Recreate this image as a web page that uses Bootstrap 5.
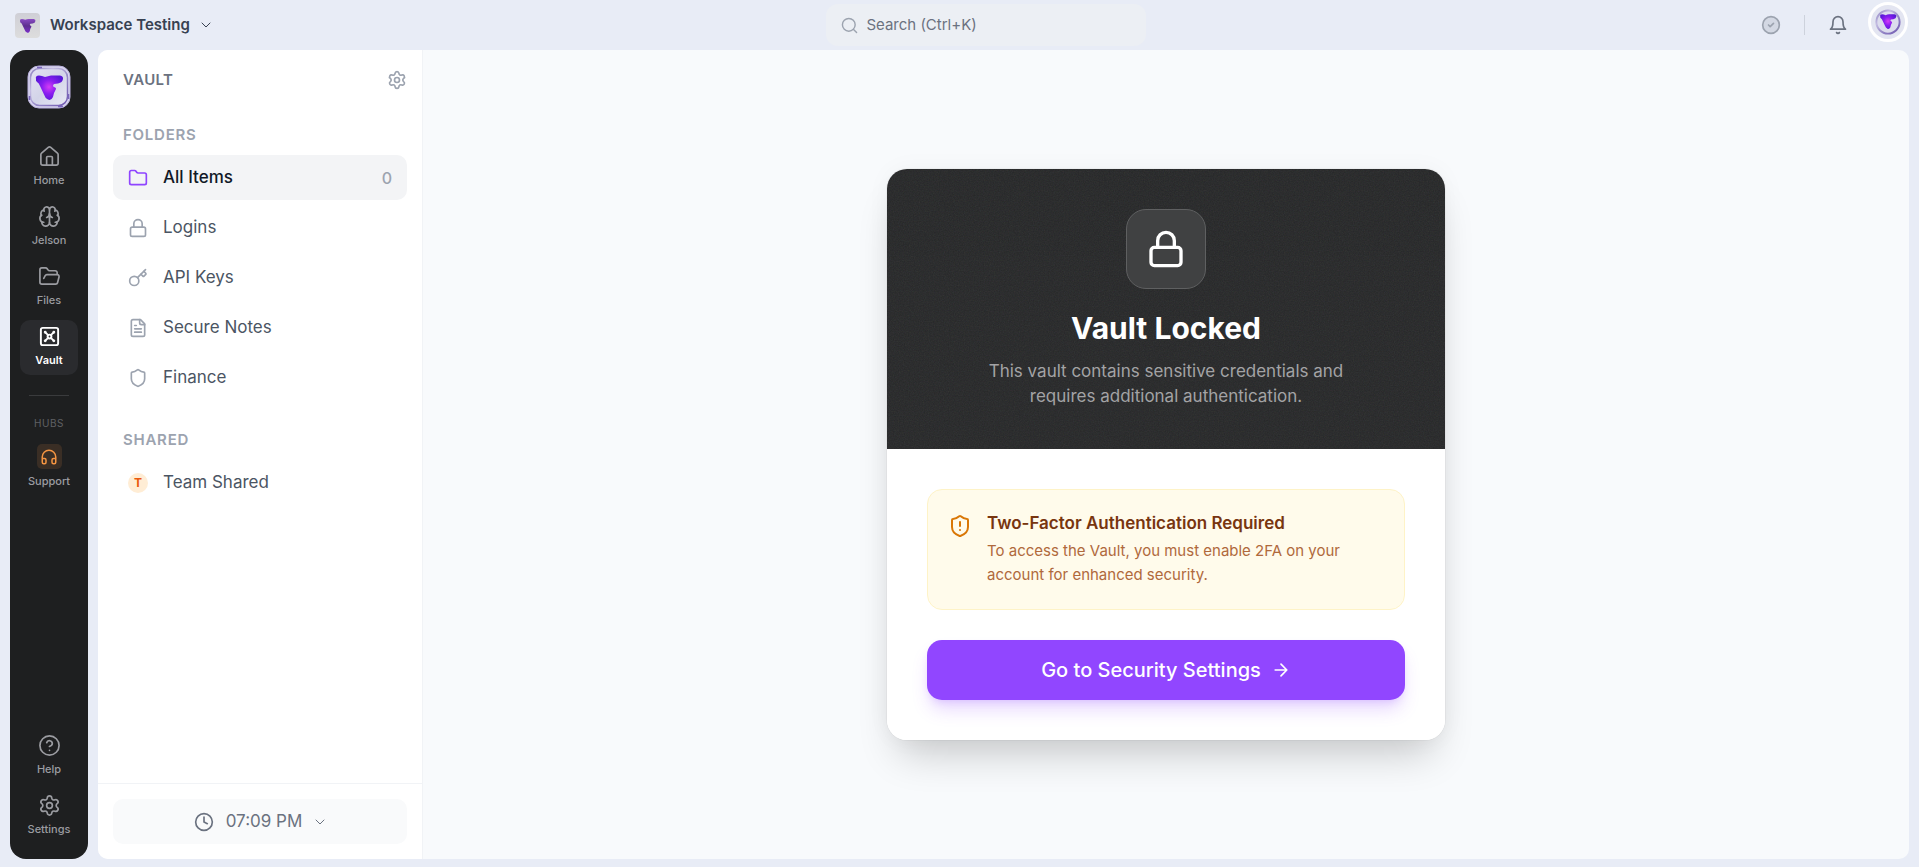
<!DOCTYPE html>
<html lang="en">
<head>
<meta charset="utf-8">
<meta name="viewport" content="width=device-width, initial-scale=1">
<title>Vault</title>
<link href="https://cdn.jsdelivr.net/npm/bootstrap@5.3.0/dist/css/bootstrap.min.css" rel="stylesheet">
<style>
  body { font-family: Inter, "Liberation Sans", sans-serif; background: #e8ecf6; color: #4b5563; }
  a { text-decoration: none; color: inherit; }
  svg.ico { fill: none; stroke: currentColor; stroke-width: 2; stroke-linecap: round; stroke-linejoin: round; flex: none; width: 20px; height: 20px; }
  svg.ico-sm { width: 12px; height: 12px; }
  svg.ico-md { width: 24px; height: 24px; }
  svg.thin { stroke-width: 1.75; }

  /* Top bar */
  .topbar { height: 50px; padding: 0 11px 0 15px; }
  .workspace { font-size: 15px; font-weight: 600; color: #374151; gap: 10px; }
  .search-box { flex: 0 1 320px; height: 42px; border-radius: 12px; background: #eceff4; padding: 0 15px; color: #9ca3af; }
  .search-box input { font-size: 15px; color: #6b7280; outline: 0; }
  .search-box input::placeholder { color: #6b7280; opacity: 1; }
  .search-box svg.ico { width: 17px; height: 17px; }
  .top-rule { width: 1px; height: 20px; background: #cdd2dc; margin: 0 23px; }
  .avatar { width: 40px; height: 40px; border: 3px solid #fff; margin: 0 0 7px 20px; background: #e3e5f1; }

  /* Dark rail */
  .rail { width: 78px; border-radius: 16px; background: #1e1f20; padding: 15px 10px; color: #9b9ca1; }
  .rail-logo { margin-bottom: 31px; }
  .rail a { display: flex; flex-direction: column; align-items: center; gap: 4px; width: 58px; height: 55px; padding-top: 5px; border-radius: 10px; font-size: 11px; line-height: 16px; font-weight: 500; }
  .rail a.active { background: #2a2b2e; color: #fff; font-weight: 600; }
  .rail a svg.ico { width: 23px; height: 23px; }
  .rail-rule { width: 40px; height: 1px; background: #3a3b3d; margin: 20px 0; }
  .rail-title { font-size: 10px; line-height: 14px; letter-spacing: 0.05em; color: #606164; margin-bottom: 9px; }
  .rail a .hub { width: 25px; height: 25px; border-radius: 5px; background: #3a2e25; color: #f59542; }
  .rail a .hub svg.ico { width: 18px; height: 18px; }

  /* Sidebar */
  .shell { border-radius: 10px; background: #f8fafc; }
  .side { width: 325px; background: #fff; border-right: 1px solid #f1f3f6; }
  .side-head { height: 60px; padding: 0 15px 0 25px; }
  .side h1, .side h2 { font-size: 15px; line-height: 20px; font-weight: 600; color: #6b7280; letter-spacing: 0.025em; margin: 0; }
  .side h2 { color: #9ca3af; letter-spacing: 0.05em; padding: 0 10px; margin-bottom: 10px; }
  .side-nav { padding: 15px; }
  .side-list { gap: 5px; margin-bottom: 30px; }
  .side-nav a { display: flex; align-items: center; gap: 15px; height: 45px; padding: 0 15px; border-radius: 10px; font-size: 17px; color: #4b5563; }
  .side-nav a svg { color: #9ca3af; }
  .side-nav a.active { background: #f3f4f6; color: #111827; font-weight: 500; }
  .side-nav a.active svg { color: #8f45ff; }
  .count { font-size: 16px; color: #9ca3af; }
  .dot { width: 20px; height: 20px; background: #ffedd5; color: #ea580c; font-size: 12px; font-weight: 700; }
  .side-foot { padding: 15px; border-top: 1px solid #f1f3f6; }
  .clock { height: 45px; border: 0; border-radius: 10px; background: #f9fafb; color: #6b7280; font-size: 17px; gap: 12px; }

  /* Lock card */
  .lock-card { width: 558px; border: 0; border-radius: 20px; overflow: hidden; box-shadow: 0 25px 40px -12px rgba(0,0,0,.2), 0 0 24px rgba(0,0,0,.04), 0 0 0 1px rgba(0,0,0,.03); }
  .lock-top { background: #262728; padding: 40px; isolation: isolate; }
  .grain { z-index: -1; opacity: .09; }
  .lock-badge { width: 80px; height: 80px; border-radius: 20px; background: #404142; border: 1px solid #5f6061; color: #fff; }
  .lock-badge svg.ico { width: 40px; height: 40px; }
  .lock-top h3 { font-size: 30px; line-height: 38px; font-weight: 700; color: #fff; margin: 20px 0 12px; }
  .lock-top p { font-size: 17px; line-height: 25px; color: #a3a3a5; max-width: 400px; margin: 0 auto; }
  .lock-body { padding: 40px; background: #fff; }
  .notice { border: 1px solid #fef3c7; background: #fffbeb; border-radius: 15px; padding: 20px 20px 22px; gap: 15px; color: #d97706; margin-bottom: 30px; }
  .notice h4 { font-size: 17px; line-height: 26px; font-weight: 600; color: #78350f; margin: 0 0 3px; }
  .notice p { font-size: 15px; line-height: 24px; color: #b0693c; margin: 0; }
  .go { height: 60px; border: 0; border-radius: 15px; background: #9146ff; color: #fff; font-size: 20px; font-weight: 500; gap: 10px; box-shadow: 0 12px 18px -3px rgba(145,70,255,.22), 0 4px 8px -4px rgba(145,70,255,.25); }
  .go:hover { background: #8438f5; color: #fff; }
</style>
</head>
<body>
<svg class="position-absolute" width="0" height="0" aria-hidden="true">
  <defs>
    <radialGradient id="gem" gradientUnits="userSpaceOnUse" cx="22" cy="22" r="14"><stop offset="0" stop-color="#d43df5"/><stop offset=".5" stop-color="#8a1df0"/><stop offset="1" stop-color="#5a18d8"/></radialGradient>
    <linearGradient id="dusk" x1="0" y1="0" x2="0" y2="1"><stop offset="0" stop-color="#8a4cc4"/><stop offset=".5" stop-color="#5d2f8f"/><stop offset="1" stop-color="#7a2fc8"/></linearGradient>
    <linearGradient id="glass" x1="0" y1="0" x2="1" y2="1"><stop offset="0" stop-color="#e4e2f4"/><stop offset=".5" stop-color="#d3d4e8"/><stop offset="1" stop-color="#e8e9f5"/></linearGradient>
    <linearGradient id="rim" x1="0" y1="0" x2="1" y2="1"><stop offset="0" stop-color="#8d80c0"/><stop offset=".3" stop-color="#c4bde2"/><stop offset=".6" stop-color="#9486c6"/><stop offset="1" stop-color="#6f57b0"/></linearGradient>
    <linearGradient id="plate" x1="0" y1="0" x2="0" y2="1"><stop offset="0" stop-color="#cfcfd6"/><stop offset="1" stop-color="#dddddd"/></linearGradient>
  </defs>
  <symbol id="mark-v" viewBox="0 0 44 44"><path d="M9 14Q8 10.500 12 10.500Q15 10.500 18 12Q21 11 24 10.500H33Q36.500 11 36 14Q35.500 17.500 31 18.500L27 19Q25 21 27 22Q30 23 28.500 25Q26.500 28 26 32Q24 36 21 34.500Q18 33 17 29.500L13 21Q12 18 10 17Q8.500 16 9 14Z"/></symbol>
  <symbol id="i-home" viewBox="0 0 24 24"><path d="M15 21v-8a1 1 0 0 0-1-1h-4a1 1 0 0 0-1 1v8"/><path d="M3 10a2 2 0 0 1 .709-1.528l7-5.999a2 2 0 0 1 2.582 0l7 5.999A2 2 0 0 1 21 10v9a2 2 0 0 1-2 2H5a2 2 0 0 1-2-2z"/></symbol>
  <symbol id="i-brain" viewBox="0 0 24 24"><path d="M12 18V5"/><path d="M15 13a4.170 4.170 0 0 1-3-4 4.170 4.170 0 0 1-3 4"/><path d="M17.598 6.500A3 3 0 1 0 12 5a3 3 0 1 0-5.598 1.500"/><path d="M17.997 5.125a4 4 0 0 1 2.526 5.770"/><path d="M18 18a4 4 0 0 0 2-7.464"/><path d="M19.967 17.483A4 4 0 1 1 12 18a4 4 0 1 1-7.967-.517"/><path d="M6 18a4 4 0 0 1-2-7.464"/><path d="M6.003 5.125a4 4 0 0 0-2.526 5.770"/></symbol>
  <symbol id="i-open" viewBox="0 0 24 24"><path d="m6 14 1.500-2.900A2 2 0 0 1 9.240 10H20a2 2 0 0 1 1.940 2.500l-1.540 6a2 2 0 0 1-1.950 1.500H4a2 2 0 0 1-2-2V5a2 2 0 0 1 2-2h3.900a2 2 0 0 1 1.690.9l.810 1.200a2 2 0 0 0 1.670.9H18a2 2 0 0 1 2 2v2"/></symbol>
  <symbol id="i-vault" viewBox="0 0 24 24"><rect width="18" height="18" x="3" y="3" rx="2"/><circle cx="7.500" cy="7.500" r=".5" fill="currentColor"/><path d="m7.900 7.900 2.700 2.700"/><circle cx="16.500" cy="7.500" r=".5" fill="currentColor"/><path d="m13.400 10.600 2.700-2.700"/><circle cx="7.500" cy="16.500" r=".5" fill="currentColor"/><path d="m7.900 16.100 2.700-2.700"/><circle cx="16.500" cy="16.500" r=".5" fill="currentColor"/><path d="m13.400 13.400 2.700 2.700"/><circle cx="12" cy="12" r="2"/></symbol>
  <symbol id="i-phones" viewBox="0 0 24 24"><path d="M3 14h3a2 2 0 0 1 2 2v3a2 2 0 0 1-2 2H5a2 2 0 0 1-2-2v-7a9 9 0 0 1 18 0v7a2 2 0 0 1-2 2h-1a2 2 0 0 1-2-2v-3a2 2 0 0 1 2-2h3"/></symbol>
  <symbol id="i-help" viewBox="0 0 24 24"><circle cx="12" cy="12" r="10"/><path d="M9.090 9a3 3 0 0 1 5.830 1c0 2-3 3-3 3"/><path d="M12 17h.01"/></symbol>
  <symbol id="i-gear" viewBox="0 0 24 24"><path d="M9.671 4.136a2.340 2.340 0 0 1 4.659 0 2.340 2.340 0 0 0 3.319 1.915 2.340 2.340 0 0 1 2.330 4.033 2.340 2.340 0 0 0 0 3.831 2.340 2.340 0 0 1-2.330 4.033 2.340 2.340 0 0 0-3.319 1.915 2.340 2.340 0 0 1-4.659 0 2.340 2.340 0 0 0-3.320-1.915 2.340 2.340 0 0 1-2.330-4.033 2.340 2.340 0 0 0 0-3.831A2.340 2.340 0 0 1 6.350 6.051a2.340 2.340 0 0 0 3.319-1.915"/><circle cx="12" cy="12" r="3"/></symbol>
  <symbol id="i-folder" viewBox="0 0 24 24"><path d="M20 20a2 2 0 0 0 2-2V8a2 2 0 0 0-2-2h-7.900a2 2 0 0 1-1.690-.9L9.600 3.900A2 2 0 0 0 7.930 3H4a2 2 0 0 0-2 2v13a2 2 0 0 0 2 2Z"/></symbol>
  <symbol id="i-lock" viewBox="0 0 24 24"><rect width="18" height="11" x="3" y="11" rx="2"/><path d="M7 11V7a5 5 0 0 1 10 0v4"/></symbol>
  <symbol id="i-key" viewBox="0 0 24 24"><path d="m15.500 7.500 2.300 2.300a1 1 0 0 0 1.400 0l2.100-2.100a1 1 0 0 0 0-1.400L19 4"/><path d="m21 2-9.600 9.600"/><circle cx="7.500" cy="15.500" r="5.500"/></symbol>
  <symbol id="i-file" viewBox="0 0 24 24"><path d="M15 2H6a2 2 0 0 0-2 2v16a2 2 0 0 0 2 2h12a2 2 0 0 0 2-2V7Z"/><path d="M14 2v4a2 2 0 0 0 2 2h4M10 9H8M16 13H8M16 17H8"/></symbol>
  <symbol id="i-shield" viewBox="0 0 24 24"><path d="M20 13c0 5-3.500 7.500-7.660 8.950a1 1 0 0 1-.670-.010C7.500 20.500 4 18 4 13V6a1 1 0 0 1 1-1c2 0 4.500-1.200 6.240-2.720a1.170 1.170 0 0 1 1.520 0C14.510 3.810 17 5 19 5a1 1 0 0 1 1 1z"/></symbol>
  <symbol id="i-clock" viewBox="0 0 24 24"><circle cx="12" cy="12" r="10"/><path d="M12 6v6l4 2"/></symbol>
  <symbol id="i-down" viewBox="0 0 24 24"><path d="m4 8 8 8 8-8"/></symbol>
  <symbol id="i-search" viewBox="0 0 24 24"><circle cx="11" cy="11" r="9"/><path d="m22 22-4.300-4.300"/></symbol>
  <symbol id="i-check" viewBox="0 0 24 24"><circle cx="12" cy="12" r="10" fill="#d3d8e3"/><path d="m9 12 2 2 4-4"/></symbol>
  <symbol id="i-bell" viewBox="0 0 24 24"><path d="M6 8a6 6 0 0 1 12 0c0 7 3 9 3 9H3s3-2 3-9"/><path d="M10.300 21a1.940 1.940 0 0 0 3.400 0"/></symbol>
  <symbol id="i-arrow" viewBox="0 0 24 24"><path d="M5 12h14M12 5l7 7-7 7"/></symbol>
</svg>

<div class="d-flex flex-column vh-100">
  <header class="topbar d-flex align-items-center justify-content-between">
    <button type="button" class="workspace btn p-0 border-0 d-flex align-items-center">
      <svg width="25" height="25" viewBox="0 0 44 44"><rect width="44" height="44" rx="7" fill="url(#plate)"/><use href="#mark-v" fill="url(#dusk)"/></svg>
      <span>Workspace Testing</span>
      <svg class="ico ico-sm"><use href="#i-down"/></svg>
    </button>
    <label class="search-box d-flex align-items-center gap-2">
      <svg class="ico"><use href="#i-search"/></svg>
      <input type="text" class="border-0 bg-transparent p-0 flex-grow-1" placeholder="Search (Ctrl+K)" aria-label="Search">
    </label>
    <div class="d-flex align-items-center">
      <button type="button" class="btn p-0 border-0 d-flex" aria-label="Status"><svg class="ico" style="color:#9ca3af"><use href="#i-check"/></svg></button>
      <span class="top-rule"></span>
      <button type="button" class="btn p-0 border-0 d-flex" aria-label="Notifications" style="color:#6b7280"><svg class="ico"><use href="#i-bell"/></svg></button>
      <a href="#" class="avatar rounded-circle d-block" aria-label="Account">
        <svg width="34" height="34" viewBox="0 0 44 44" class="d-block"><circle cx="22" cy="22" r="15" fill="#dcdced" stroke="url(#rim)" stroke-width="2.500"/><svg x="5" y="4" width="34" height="34"><use href="#mark-v" fill="url(#gem)"/></svg></svg>
      </a>
    </div>
  </header>

  <div class="d-flex flex-grow-1 pb-2" style="min-height:0;padding:0 10px;gap:10px">
    <nav class="rail d-flex flex-column align-items-center flex-shrink-0" aria-label="Main">
      <svg width="44" height="44" viewBox="0 0 44 44" class="rail-logo flex-shrink-0"><rect x="1" y="1" width="42" height="42" rx="11" fill="#d9d6ee" stroke="#b9b0de"/><rect x="3.500" y="3.500" width="37" height="37" rx="9" fill="url(#glass)" stroke="url(#rim)" stroke-width="1.500"/><path d="M10 2.500h5M31 41.500h5M41.500 29v5M2.500 31v4" stroke="#7a66bb" stroke-width="1.500"/><use href="#mark-v" fill="url(#gem)"/></svg>
      <div class="d-flex flex-column" style="gap:5px">
        <a href="#"><svg class="ico thin"><use href="#i-home"/></svg>Home</a>
        <a href="#"><svg class="ico thin"><use href="#i-brain"/></svg>Jelson</a>
        <a href="#"><svg class="ico thin"><use href="#i-open"/></svg>Files</a>
        <a href="#" class="active" aria-current="page"><svg class="ico"><use href="#i-vault"/></svg>Vault</a>
      </div>
      <span class="rail-rule"></span>
      <span class="rail-title">HUBS</span>
      <a href="#"><span class="hub d-flex align-items-center justify-content-center"><svg class="ico"><use href="#i-phones"/></svg></span>Support</a>
      <div class="d-flex flex-column mt-auto" style="gap:5px">
        <a href="#"><svg class="ico thin"><use href="#i-help"/></svg>Help</a>
        <a href="#"><svg class="ico thin"><use href="#i-gear"/></svg>Settings</a>
      </div>
    </nav>

    <div class="shell d-flex flex-grow-1 overflow-hidden">
      <aside class="side d-flex flex-column flex-shrink-0">
        <div class="side-head d-flex align-items-center justify-content-between">
          <h1>VAULT</h1>
          <button type="button" class="btn p-0 border-0 d-flex" aria-label="Vault settings"><svg class="ico" style="color:#9ca3af"><use href="#i-gear"/></svg></button>
        </div>
        <nav class="side-nav flex-grow-1" aria-label="Vault">
          <h2>FOLDERS</h2>
          <div class="side-list d-flex flex-column">
            <a href="#" class="active"><svg class="ico"><use href="#i-folder"/></svg>All Items<span class="count ms-auto">0</span></a>
            <a href="#"><svg class="ico"><use href="#i-lock"/></svg>Logins</a>
            <a href="#"><svg class="ico"><use href="#i-key"/></svg>API Keys</a>
            <a href="#"><svg class="ico"><use href="#i-file"/></svg>Secure Notes</a>
            <a href="#"><svg class="ico"><use href="#i-shield"/></svg>Finance</a>
          </div>
          <h2>SHARED</h2>
          <a href="#"><span class="dot rounded-circle d-flex align-items-center justify-content-center">T</span>Team Shared</a>
        </nav>
        <div class="side-foot">
          <button type="button" class="clock w-100 d-flex align-items-center justify-content-center">
            <svg class="ico"><use href="#i-clock"/></svg><span>07:09 PM</span><svg class="ico ico-sm"><use href="#i-down"/></svg>
          </button>
        </div>
      </aside>

      <main class="flex-grow-1 d-flex align-items-center justify-content-center">
        <section class="card lock-card">
          <div class="lock-top position-relative text-center">
            <svg class="grain position-absolute top-0 start-0 w-100 h-100" aria-hidden="true"><filter id="noise"><feTurbulence type="fractalNoise" baseFrequency=".8" numOctaves="3"/></filter><rect width="100%" height="100%" filter="url(#noise)"/></svg>
            <div class="lock-badge d-flex align-items-center justify-content-center mx-auto"><svg class="ico"><use href="#i-lock"/></svg></div>
            <h3>Vault Locked</h3>
            <p>This vault contains sensitive credentials and requires additional authentication.</p>
          </div>
          <div class="lock-body">
            <div class="notice d-flex">
              <svg class="ico ico-md mt-1"><use href="#i-shield"/><path d="M12 8v4M12 16h.01"/></svg>
              <div>
                <h4>Two-Factor Authentication Required</h4>
                <p>To access the Vault, you must enable 2FA on your account for enhanced security.</p>
              </div>
            </div>
            <button type="button" class="btn go w-100 d-flex align-items-center justify-content-center">
              Go to Security Settings<svg class="ico"><use href="#i-arrow"/></svg>
            </button>
          </div>
        </section>
      </main>
    </div>
  </div>
</div>
<script src="https://cdn.jsdelivr.net/npm/bootstrap@5.3.0/dist/js/bootstrap.bundle.min.js"></script>
</body>
</html>
